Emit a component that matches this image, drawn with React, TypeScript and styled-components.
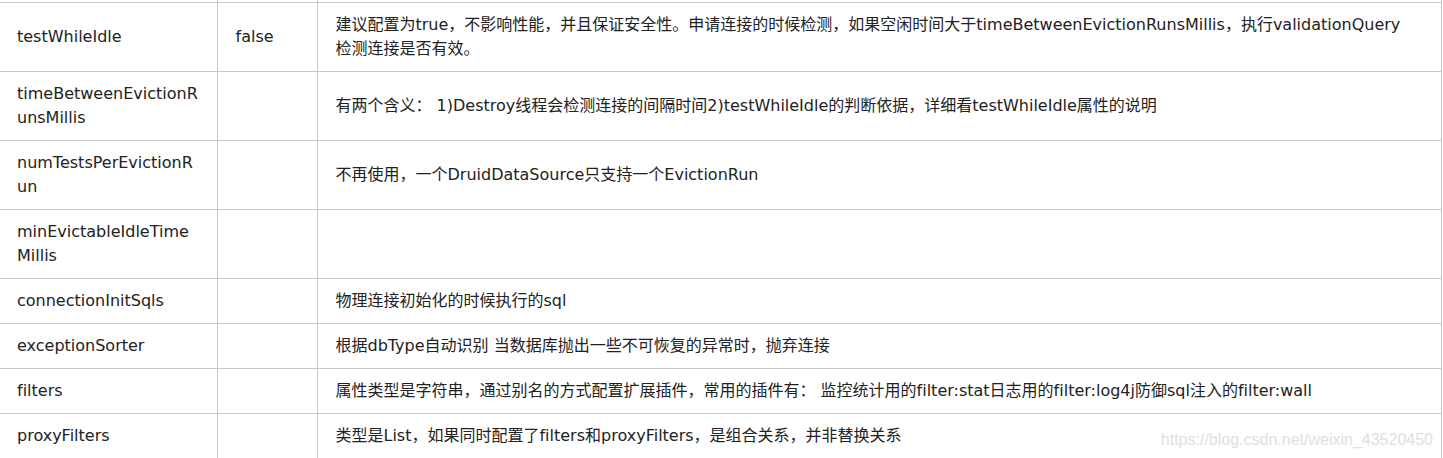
import React from 'react';
import styled, { createGlobalStyle } from 'styled-components';

const GlobalStyle = createGlobalStyle`
  html, body {
    margin: 0;
    padding: 0;
    background: #fff;
  }
  body {
    width: 1443px;
    height: 458px;
    overflow: hidden;
    font-family: 'DejaVu Sans', 'Noto Sans CJK SC', sans-serif;
  }
`;

const rows: { name: string; def: string; desc: React.ReactNode }[] = [
  {
    name: 'testWhileIdle',
    def: 'false',
    desc: (
      <>
        建议配置为true，不影响性能，并且保证安全性。申请连接的时候检测，如果空闲时间大于timeBetweenEvictionRunsMillis，执行validationQuery
        <br />
        检测连接是否有效。
      </>
    ),
  },
  {
    name: 'timeBetweenEvictionRunsMillis',
    def: '',
    desc: '有两个含义： 1)Destroy线程会检测连接的间隔时间2)testWhileIdle的判断依据，详细看testWhileIdle属性的说明',
  },
  {
    name: 'numTestsPerEvictionRun',
    def: '',
    desc: '不再使用，一个DruidDataSource只支持一个EvictionRun',
  },
  { name: 'minEvictableIdleTimeMillis', def: '', desc: '' },
  { name: 'connectionInitSqls', def: '', desc: '物理连接初始化的时候执行的sql' },
  {
    name: 'exceptionSorter',
    def: '',
    desc: '根据dbType自动识别 当数据库抛出一些不可恢复的异常时，抛弃连接',
  },
  {
    name: 'filters',
    def: '',
    desc: '属性类型是字符串，通过别名的方式配置扩展插件，常用的插件有： 监控统计用的filter:stat日志用的filter:log4j防御sql注入的filter:wall',
  },
  {
    name: 'proxyFilters',
    def: '',
    desc: '类型是List，如果同时配置了filters和proxyFilters，是组合关系，并非替换关系',
  },
];

export default function App() {
  return (
    <Page>
      <GlobalStyle />
      <Table>
        <colgroup>
          <col style={{ width: 217 }} />
          <col style={{ width: 100 }} />
          <col />
        </colgroup>
        <tbody>
          <ClipRow>
            <td />
            <td />
            <td />
          </ClipRow>
          {rows.map((r) => (
            <tr key={r.name}>
              <Cell>{r.name}</Cell>
              <Cell>{r.def}</Cell>
              <Cell>{r.desc}</Cell>
            </tr>
          ))}
        </tbody>
      </Table>
      <Watermark>https://blog.csdn.net/weixin_43520450</Watermark>
    </Page>
  );
}

const Page = styled.div`
  position: relative;
  width: 1443px;
  height: 458px;
  overflow: hidden;
`;

const Table = styled.table`
  width: 1442px;
  table-layout: fixed;
  border-collapse: collapse;
  border-spacing: 0;
  font-size: 16px;
  line-height: 24px;
  color: #222;
  font-variant-ligatures: none;
`;

const ClipRow = styled.tr`
  td {
    height: 2px;
    padding: 0;
    border-left: 1px solid #c8c8c8;
    border-bottom: 1px solid #c8c8c8;
  }
  td:first-child {
    border-left: none;
  }
  td:last-child {
    border-right: 1px solid #c8c8c8;
  }
`;

const Cell = styled.td`
  padding: 10px 17px 10px 18px;
  vertical-align: middle;
  word-break: break-all;
  border: 1px solid #c8c8c8;
  &:first-child {
    border-left: none;
    padding-left: 17px;
  }
`;

const Watermark = styled.div`
  position: absolute;
  right: 10px;
  bottom: 9px;
  font-family: 'Liberation Sans', Arial, sans-serif;
  font-size: 16px;
  color: #e0e0e0;
  white-space: nowrap;
`;
